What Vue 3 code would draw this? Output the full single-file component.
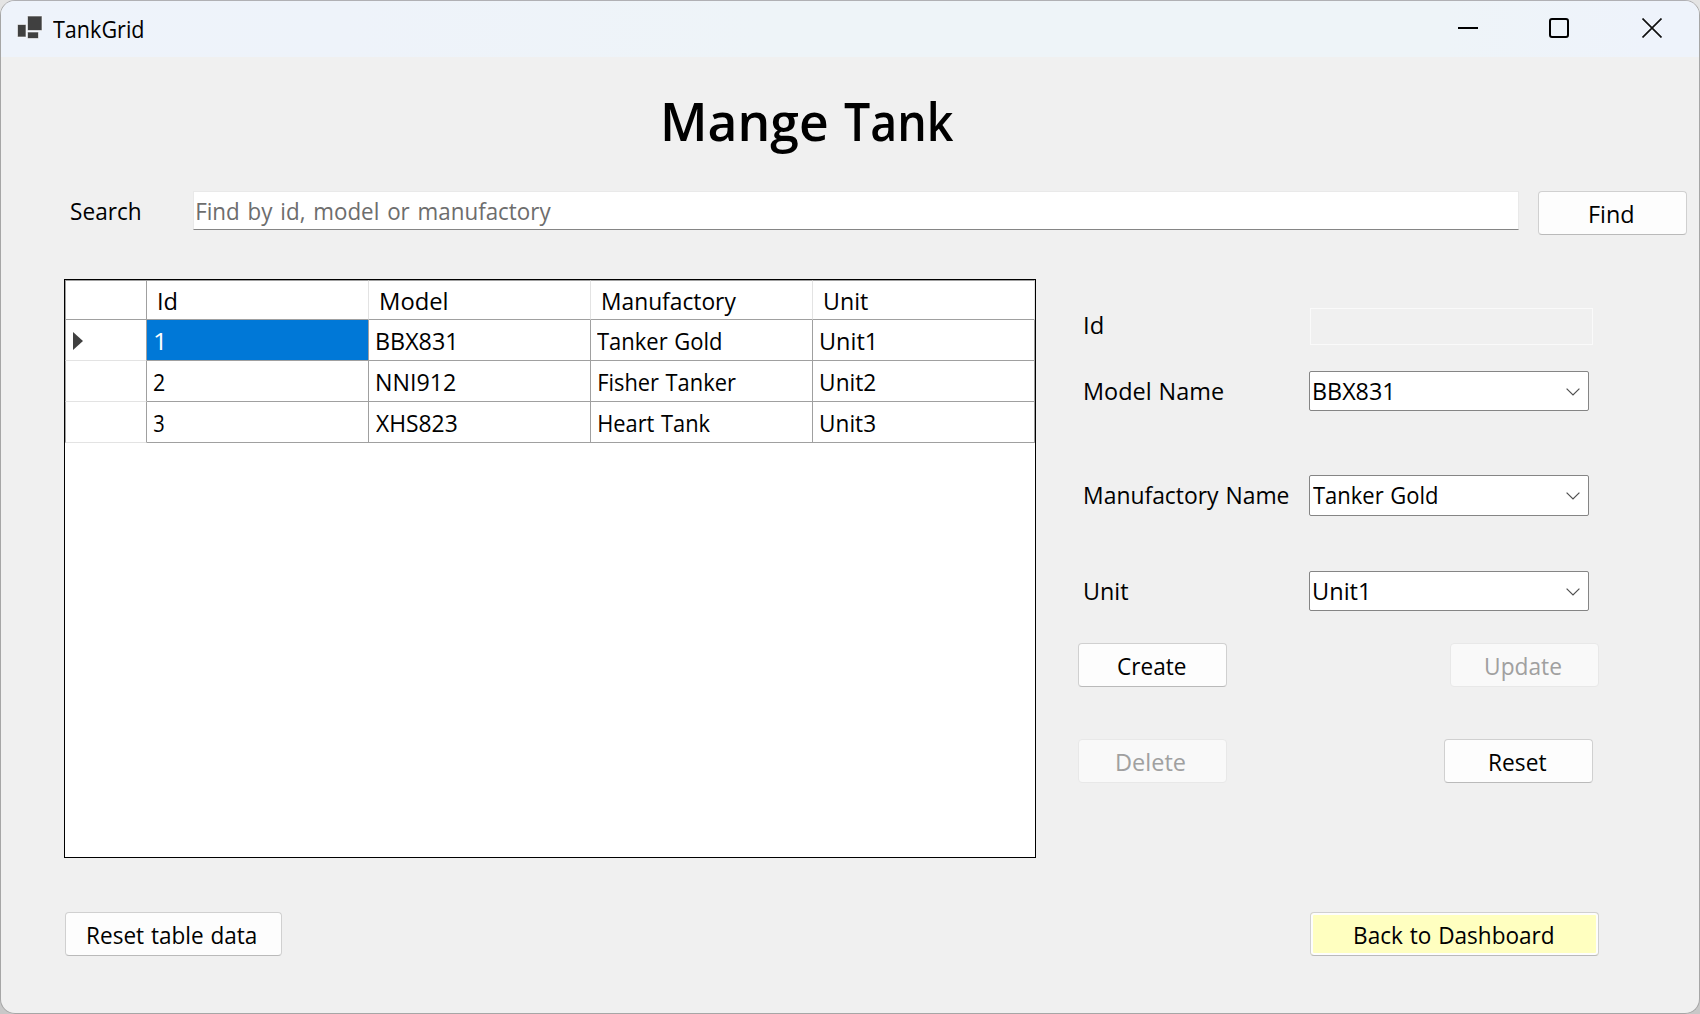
<script setup>
const columns = [
  { text: 'Id', x: 12, w: 17.4 },
  { text: 'Model', x: 11.7, w: 66.5 },
  { text: 'Manufactory', x: 12.2, w: 133.7 },
  { text: 'Unit', x: 12, w: 42.7 },
]

const rows = [
  [
    { text: '1', x: 8.3, w: 7.4 },
    { text: 'BBX831', x: 7.5, w: 77 },
    { text: 'Tanker Gold', x: 6.4, w: 124 },
    { text: 'Unit1', x: 7.7, w: 52.5 },
  ],
  [
    { text: '2', x: 7.3, w: 10.7 },
    { text: 'NNI912', x: 7.5, w: 78.6 },
    { text: 'Fisher Tanker', x: 7.8, w: 137 },
    { text: 'Unit2', x: 7.7, w: 54.6 },
  ],
  [
    { text: '3', x: 7.2, w: 10 },
    { text: 'XHS823', x: 6.6, w: 81 },
    { text: 'Heart Tank', x: 7.9, w: 111.4 },
    { text: 'Unit3', x: 7.7, w: 54.4 },
  ],
]

const fields = [
  { label: 'Model Name', w: 138.6, value: 'BBX831', vw: 77, kind: 'model' },
  { label: 'Manufactory Name', w: 204, value: 'Tanker Gold', vw: 124, kind: 'manufactory' },
  { label: 'Unit', w: 43, value: 'Unit1', vw: 52.8, kind: 'unit' },
]

// Fits a label's glyphs to a given width, starting at the element's left edge.
const ctx = document.createElement('canvas').getContext('2d')
const vFit = {
  mounted(el, { value }) {
    const cs = getComputedStyle(el)
    ctx.font = `${cs.fontWeight} ${cs.fontSize} ${cs.fontFamily}`
    ctx.wordSpacing = cs.wordSpacing
    const m = ctx.measureText(el.textContent)
    const ink = m.actualBoundingBoxLeft + m.actualBoundingBoxRight
    el.style.width = `${value}px`
    el.style.transform = `scaleX(${value / ink}) translateX(${m.actualBoundingBoxLeft}px)`
  },
}
</script>

<template>
  <div class="window">
    <header class="titlebar">
      <svg class="app-icon" width="28" height="28" viewBox="0 0 28 28">
        <g fill="#404040" stroke="#fff" stroke-opacity=".6" stroke-width="1">
          <rect x="1.5" y="10.5" width="8.5" height="12.5" />
          <rect x="11.5" y="18" width="11" height="6.5" />
          <rect x="11.5" y="2" width="14.5" height="14.5" />
        </g>
      </svg>
      <span class="t app-name" v-fit="90">TankGrid</span>
      <div class="controls">
        <svg width="20" height="20" viewBox="0 0 20 20"><path d="M0 10H20" stroke="#000" stroke-width="2" /></svg>
        <svg width="20" height="20" viewBox="0 0 20 20"><rect x="1" y="1" width="18" height="18" rx="2" fill="none" stroke="#000" stroke-width="2" /></svg>
        <svg width="20" height="20" viewBox="0 0 20 20"><path d="M.5 .5L19.5 19.5M19.5 .5L.5 19.5" stroke="#111" stroke-width="1.7" /></svg>
      </div>
    </header>

    <h1><span class="t" v-fit="162.7">Mange</span> <span class="t" v-fit="109.6">Tank</span></h1>

    <div class="search">
      <div class="search-label"><span class="t" v-fit="69">Search</span></div>
      <div class="search-box"><span class="t" v-fit="354.5">Find by id, model or manufactory</span></div>
      <button class="btn"><span class="t" v-fit="43">Find</span></button>
    </div>

    <main class="content">
      <section class="grid">
        <div class="row head">
          <div class="cell corner"></div>
          <div v-for="c in columns" :key="c.text" class="cell" :style="{ paddingLeft: c.x + 'px' }">
            <span class="t" v-fit="c.w">{{ c.text }}</span>
          </div>
        </div>
        <div v-for="(r, i) in rows" :key="i" class="row">
          <div class="cell marker">
            <svg v-if="i === 0" width="12" height="20" viewBox="0 0 12 20"><path d="M1 1V19L11 10Z" fill="#404040" /></svg>
          </div>
          <div
            v-for="(c, j) in r"
            :key="j"
            class="cell"
            :class="{ selected: i === 0 && j === 0 }"
            :style="{ paddingLeft: c.x + 'px' }"
          >
            <span class="t" v-fit="c.w">{{ c.text }}</span>
          </div>
        </div>
      </section>

      <section class="form">
        <div class="field id">
          <div class="label"><span class="t" v-fit="17.5">Id</span></div>
          <div class="readonly"></div>
        </div>
        <div v-for="f in fields" :key="f.kind" class="field" :class="f.kind">
          <div class="label"><span class="t" v-fit="f.w">{{ f.label }}</span></div>
          <div class="combo">
            <span class="t" v-fit="f.vw">{{ f.value }}</span>
            <svg width="14" height="8" viewBox="0 0 14 8"><path d="M.6 .6L7 7L13.4 .6" fill="none" stroke="#505050" stroke-width="1.2" /></svg>
          </div>
        </div>
        <div class="actions first">
          <button class="btn"><span class="t" v-fit="68">Create</span></button>
          <button class="btn" disabled><span class="t" v-fit="75.5">Update</span></button>
        </div>
        <div class="actions second">
          <button class="btn" disabled><span class="t" v-fit="68.5">Delete</span></button>
          <button class="btn"><span class="t" v-fit="56">Reset</span></button>
        </div>
      </section>
    </main>

    <footer class="footer">
      <button class="btn wide"><span class="t" v-fit="168">Reset table data</span></button>
      <button class="btn back"><span class="t" v-fit="198">Back to Dashboard</span></button>
    </footer>
  </div>
</template>

<style>
body {
  margin: 0;
  background: linear-gradient(#e4e4e4, #c8c8c8);
}
</style>

<style scoped>
.window {
  box-sizing: border-box;
  width: 1700px;
  height: 1014px;
  border: 1px solid #a6a6a6;
  border-top-color: #b0b0b4;
  border-radius: 15px;
  overflow: hidden;
  background: #f0f0f0;
  color: #000;
  font: 24px/32px "Open Sans", "Noto Sans", sans-serif;
  word-spacing: 1px;
}
.t {
  display: block;
  white-space: nowrap;
  transform-origin: 0 50%;
}
.titlebar {
  height: 56px;
  display: flex;
  align-items: flex-start;
  background: linear-gradient(90deg, #eef3fb 0%, #eef3fa 20%, #eef4f8 45%, #eef4f8 85%, #eef3fb 97%);
}
.app-icon {
  margin: 13px 0 0 15px;
}
.app-name {
  margin: 12px 0 0 8.5px;
}
.controls {
  display: flex;
  gap: 72px;
  margin: 17px 37px 0 auto;
}
.controls svg:first-child {
  margin-right: -1px;
}
.controls svg:last-child {
  margin-left: 1px;
}
h1 {
  display: flex;
  gap: 17px;
  margin: 29px 0 0 663px;
  font-size: 52px;
  line-height: 70px;
  font-weight: 600;
}
.search {
  display: flex;
  align-items: flex-start;
  margin-top: 35px;
  padding-left: 70px;
}
.search-label {
  width: 122px;
  padding-top: 4px;
}
.search-box {
  box-sizing: border-box;
  width: 1326px;
  height: 39px;
  margin-right: 19px;
  padding: 3px 0 0 2.5px;
  border: 1px solid #e9e9e9;
  border-bottom-color: #858585;
  background: #fff;
  color: #6d6d6d;
  word-spacing: 2.2px;
}
.btn {
  box-sizing: border-box;
  width: 149px;
  height: 44px;
  padding: 1px 2px 0 0;
  display: flex;
  justify-content: center;
  align-items: center;
  border: 1px solid #d0d0d0;
  border-bottom-color: #bababa;
  border-radius: 4px;
  background: #fdfdfd;
  color: #000;
  font: inherit;
  word-spacing: inherit;
}
.btn:disabled {
  border-color: #e8e8e8;
  background: #f9f9f9;
  color: #a0a0a0;
}
.content {
  display: flex;
  margin: 44px 0 0 63px;
}
.grid {
  box-sizing: border-box;
  width: 972px;
  height: 579px;
  border: 1px solid #000;
  background: #fff;
}
.row {
  display: grid;
  grid-template-columns: 82px repeat(4, 222px);
  height: 41px;
}
.row.head {
  height: 40px;
}
.cell {
  box-sizing: border-box;
  padding-top: 5px;
  border-right: 1px solid #a0a0a0;
  border-bottom: 1px solid #a0a0a0;
}
.head .cell {
  padding-top: 4px;
  border-top: 1px solid #a0a0a0;
  border-right-color: #e3e3e3;
}
.head .corner {
  border-left: 1px solid #a0a0a0;
  border-right-color: #a0a0a0;
}
.marker {
  padding: 11px 0 0 6px;
  border-left: 1px solid #a0a0a0;
  border-bottom-color: #e3e3e3;
}
.marker svg {
  display: block;
}
.selected {
  background: #0078d7;
  background-clip: padding-box;
  color: #fff;
}
.form {
  width: 521px;
  margin-left: 42px;
}
.field {
  display: flex;
  align-items: flex-start;
}
.label {
  box-sizing: border-box;
  width: 231px;
  padding: 1px 0 0 6.7px;
}
.id {
  margin-top: 29px;
}
.readonly {
  box-sizing: border-box;
  width: 283px;
  height: 37px;
  margin-left: 1px;
  border: 1px solid #fafafa;
}
.model {
  margin-top: 26px;
}
.model .label,
.manufactory .label,
.unit .label {
  padding-top: 4px;
}
.manufactory {
  margin-top: 64px;
}
.unit {
  margin-top: 55px;
}
.combo {
  box-sizing: border-box;
  width: 280px;
  height: 40px;
  padding: 3px 8.5px 0 3.6px;
  display: flex;
  justify-content: space-between;
  border: 1px solid #858585;
  border-radius: 2px;
  background: #fff;
}
.manufactory .combo {
  height: 41px;
  padding-left: 2.8px;
}
.combo svg {
  margin-top: 13px;
}
.actions {
  display: flex;
  justify-content: space-between;
}
.first {
  margin-top: 32px;
}
.second {
  margin-top: 52px;
  padding-right: 6px;
}
.footer {
  display: flex;
  justify-content: space-between;
  margin: 54px 100px 0 64px;
}
.wide {
  width: 217px;
  padding-right: 3px;
}
.back {
  width: 289px;
  padding-right: 2px;
  background: #ffffc0;
  box-shadow: inset 0 0 0 2px #fdfdfd;
}
</style>
